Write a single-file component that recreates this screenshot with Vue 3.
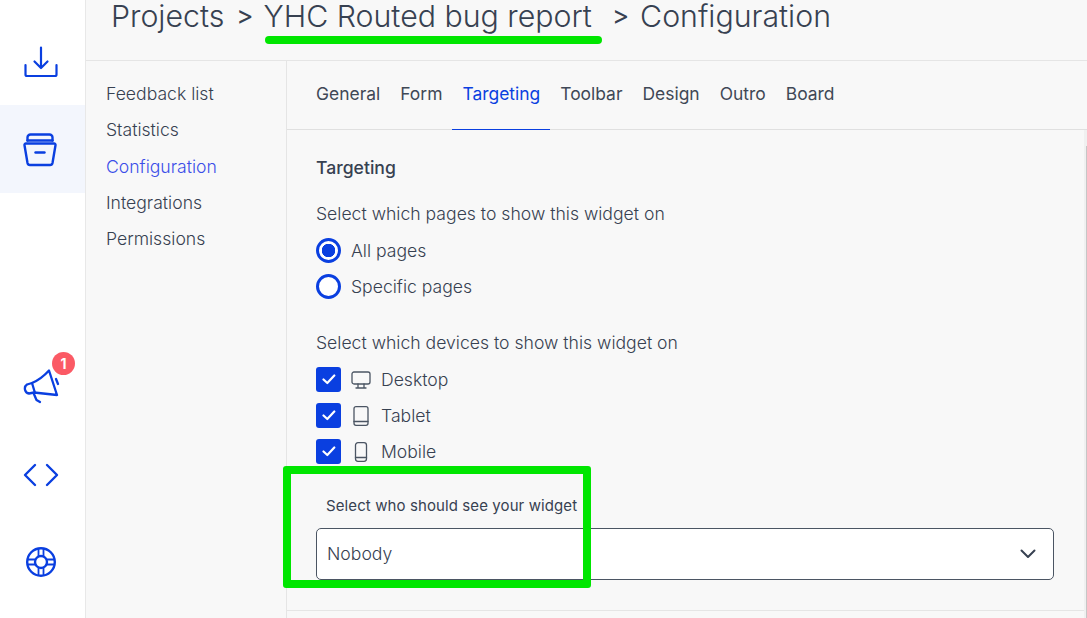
<script setup>
const menu = [
  { label: 'Feedback list' },
  { label: 'Statistics' },
  { label: 'Configuration', active: true },
  { label: 'Integrations' },
  { label: 'Permissions' },
]

const tabs = ['General', 'Form', 'Targeting', 'Toolbar', 'Design', 'Outro', 'Board']
</script>

<template>
  <div class="page">
    <aside class="rail">
      <a class="rail-item rail-download">
        <svg width="34" height="34" viewBox="0 0 34 34" fill="none" stroke="#0a3fe0" stroke-width="2.2" stroke-linecap="round" stroke-linejoin="round">
          <path d="M17 1.500v20M10.500 15.500l6.500 6.500 6.500-6.500" />
          <path d="M1.500 19v9.500a1.500 1.500 0 0 0 1.500 1.500h28a1.500 1.500 0 0 0 1.500-1.500V19" />
        </svg>
      </a>
      <a class="rail-item rail-archive">
        <svg width="34" height="36" viewBox="0 0 34 36" fill="none" stroke="#0a3fe0" stroke-width="2.4" stroke-linecap="round" stroke-linejoin="round">
          <path d="M4.500 8.500V5.500a3 3 0 0 1 3-3h19a3 3 0 0 1 3 3v3" />
          <path d="M4.500 8.500h25" />
          <path d="M3 11.500h28a1.500 1.500 0 0 1 1.500 1.800l-3 17.700a2.500 2.500 0 0 1-2.500 2H7a2.500 2.500 0 0 1-2.500-2l-3-17.700A1.500 1.500 0 0 1 3 11.500z" />
          <path d="M12.500 20.500h9" />
        </svg>
      </a>
      <div class="rail-bottom">
        <a class="rail-item rail-news">
          <svg width="38" height="36" viewBox="0 0 38 36" fill="none" stroke="#0a3fe0" stroke-width="2.3" stroke-linecap="round" stroke-linejoin="round">
            <path d="M27 1.500L35 26 12 23.500 7 24.500A5 5 0 0 1 5 15.500L10 14C16 11.500 22 7 27 1.500z" />
            <path d="M10 14l3 10M11.500 24l3 7 3.500 2" />
            <path d="M34 10l2 5" />
          </svg>
          <span class="badge">1</span>
        </a>
        <a class="rail-item rail-code">
          <svg width="36" height="24" viewBox="0 0 36 24" fill="none" stroke="#0a3fe0" stroke-width="2.400" stroke-linecap="round" stroke-linejoin="round">
            <path d="M12 2L2 12l10 10M24 2l10 10-10 10" />
          </svg>
        </a>
        <a class="rail-item rail-help">
          <svg width="32" height="32" viewBox="0 0 32 32" fill="none" stroke="#0a3fe0" stroke-width="2.400">
            <circle cx="16" cy="16" r="13.800" />
            <circle cx="16" cy="16" r="6" />
            <path d="M13.500 2.500v8M18.500 2.500v8M13.500 21.500v8M18.500 21.500v8M2.500 13.500h8M2.500 18.500h8M21.500 13.500h8M21.500 18.500h8" stroke-width="1.800" />
          </svg>
        </a>
      </div>
    </aside>

    <div class="body">
      <header class="crumbs">
        <span>Projects</span>
        <span class="sep">&gt;</span>
        <span class="crumb-project">YHC Routed bug report</span>
        <span class="sep sep-wide">&gt;</span>
        <span>Configuration</span>
      </header>

      <div class="columns">
        <nav class="submenu">
          <a v-for="item in menu" :key="item.label" :class="{ active: item.active }">{{ item.label }}</a>
        </nav>

        <main class="main">
          <div class="tabs">
            <a v-for="tab in tabs" :key="tab" :class="{ current: tab === 'Targeting' }">{{ tab }}</a>
          </div>

          <section class="content">
            <h2>Targeting</h2>

            <p class="question">Select which pages to show this widget on</p>
            <label class="option">
              <span class="radio checked"></span>
              All pages
            </label>
            <label class="option">
              <span class="radio"></span>
              Specific pages
            </label>

            <p class="question devices-question">Select which devices to show this widget on</p>
            <label class="option">
              <span class="check">
                <svg width="14" height="11" viewBox="0 0 14 11" fill="none" stroke="#fff" stroke-width="2.200" stroke-linecap="round" stroke-linejoin="round"><path d="M1.500 5.500l3.800 3.500 7-7.500" /></svg>
              </span>
              <svg class="device" width="20" height="18" viewBox="0 0 20 18" fill="none" stroke="#4b5563" stroke-width="1.300" stroke-linecap="round" stroke-linejoin="round">
                <rect x="1" y="1" width="18" height="12" rx="2" />
                <path d="M7 13v3.500M13 13v3.500M5 17h10" />
              </svg>
              <span class="option-text">Desktop</span>
            </label>
            <label class="option">
              <span class="check">
                <svg width="14" height="11" viewBox="0 0 14 11" fill="none" stroke="#fff" stroke-width="2.200" stroke-linecap="round" stroke-linejoin="round"><path d="M1.500 5.500l3.800 3.500 7-7.500" /></svg>
              </span>
              <svg class="device" width="20" height="20" viewBox="0 0 20 20" fill="none" stroke="#4b5563" stroke-width="1.300" stroke-linecap="round" stroke-linejoin="round">
                <rect x="3" y="0.700" width="14" height="18.600" rx="2" />
                <path d="M3 15.500h14" />
              </svg>
              Tablet
            </label>
            <label class="option">
              <span class="check">
                <svg width="14" height="11" viewBox="0 0 14 11" fill="none" stroke="#fff" stroke-width="2.200" stroke-linecap="round" stroke-linejoin="round"><path d="M1.500 5.500l3.800 3.500 7-7.500" /></svg>
              </span>
              <svg class="device" width="20" height="20" viewBox="0 0 20 20" fill="none" stroke="#4b5563" stroke-width="1.300" stroke-linecap="round" stroke-linejoin="round">
                <rect x="4.500" y="0.700" width="11" height="18.600" rx="2.500" />
                <path d="M4.500 15.500h11" />
              </svg>
              Mobile
            </label>

            <p class="who-label">Select who should see your widget</p>
            <div class="select">
              <span class="select-value">Nobody</span>
              <svg width="16" height="10" viewBox="0 0 16 10" fill="none" stroke="#374151" stroke-width="2" stroke-linecap="round" stroke-linejoin="round"><path d="M1.500 1.500L8 8l6.500-6.500" /></svg>
            </div>
          </section>
        </main>
      </div>
    </div>

    <!-- green marks someone drew over the screenshot -->
    <div class="mark-line"></div>
    <div class="mark-box"></div>
  </div>
</template>

<style scoped>
.page {
  position: relative;
  display: flex;
  width: 1087px;
  height: 618px;
  overflow: hidden;
  background: #f8f8f8;
  color: #374151;
  font-family: Inter, "Noto Sans", sans-serif;
  font-weight: 300;
}

.rail {
  display: flex;
  flex-direction: column;
  flex: 0 0 86px;
  background: #fff;
  border-right: 1px solid #e8e8e8;
  box-sizing: border-box;
}

.rail-item {
  position: relative;
  display: flex;
  align-items: center;
  justify-content: center;
  box-sizing: border-box;
  padding-right: 4px;
}

.rail-download {
  height: 105px;
  padding-top: 21px;
}

.rail-archive {
  height: 88px;
  padding-top: 2px;
  padding-right: 6px;
  background: #f3f6fd;
}

.rail-bottom {
  margin-top: 160px;
}

.rail-news {
  height: 50px;
  padding-top: 18px;
}

.rail-code {
  height: 24px;
  margin-top: 60px;
}

.rail-help {
  height: 32px;
  margin-top: 59px;
}

.badge {
  position: absolute;
  left: 52px;
  top: -1px;
  width: 23px;
  height: 23px;
  border-radius: 50%;
  background: #fb5a65;
  color: #fff;
  font-size: 14px;
  font-weight: 700;
  line-height: 23px;
  text-align: center;
}

.body {
  flex: 1;
  display: flex;
  flex-direction: column;
  min-width: 0;
}

.crumbs {
  display: flex;
  height: 61px;
  box-sizing: border-box;
  padding-left: 25px;
  border-bottom: 1px solid #e5e5e5;
  font-size: 30.300px;
  line-height: 32px;
  white-space: pre;
  color: #374151;
}

.sep {
  margin: 0 14px 0 12px;
  font-size: 26px;
  font-weight: 400;
}

.crumb-project {
  margin-left: -4px;
}

.sep-wide {
  margin: 0 11px 0 20px;
}

.columns {
  flex: 1;
  display: flex;
  min-height: 0;
}

.submenu {
  flex: 0 0 201px;
  display: flex;
  flex-direction: column;
  gap: 14.300px;
  box-sizing: border-box;
  padding: 22px 0 0 20px;
  border-right: 1px solid #e5e5e5;
  font-size: 17.600px;
  line-height: 22px;
}

.submenu a.active {
  color: #3b4ee8;
}

.main {
  flex: 1;
  display: flex;
  flex-direction: column;
  min-width: 0;
}

.tabs {
  display: flex;
  height: 69px;
  box-sizing: border-box;
  padding-left: 19px;
  border-bottom: 1px solid #e0e0e0;
  font-size: 17.450px;
  font-weight: 400;
  color: #3f4856;
}

.tabs a {
  padding: 0 10px;
  line-height: 66px;
  height: 69px;
  box-sizing: border-box;
}

.tabs a.current {
  color: #0a3fe0;
  border-bottom: 1px solid #0a3fe0;
}

.content {
  flex: 1;
  box-sizing: border-box;
  padding: 27px 0 0 29px;
  margin-right: 3px;
  border-bottom: 1px solid #e5e5e5;
  margin-bottom: 7px;
  position: relative;
}

/* scrollbar track and thumb at the right edge */
.content::before {
  content: "";
  position: absolute;
  right: -3px;
  top: 0;
  bottom: -8px;
  width: 3px;
  background: #f0f0f0;
}

.content::after {
  content: "";
  position: absolute;
  right: -3px;
  top: 16px;
  bottom: -8px;
  width: 1px;
  background: #c6c6c6;
}

h2 {
  margin: 0;
  font-size: 17.600px;
  font-weight: 500;
  line-height: 22px;
  color: #374151;
}

.question {
  margin: 24px 0 0;
  font-size: 17.600px;
  line-height: 22px;
}

.devices-question {
  margin-top: 33px;
}

.option {
  display: flex;
  align-items: center;
  height: 25px;
  margin-top: 11px;
  font-size: 17.600px;
}

.question + .option {
  margin-top: 13px;
}

.option-text {
  margin-top: -1px;
}

.radio {
  box-sizing: border-box;
  flex: none;
  width: 25px;
  height: 25px;
  margin-right: 10px;
  border: 3px solid #0a3fe0;
  border-radius: 50%;
  background: #fff;
}

.radio.checked {
  background: radial-gradient(circle, #0a3fe0 0 6.500px, #fff 7px);
}

.check {
  display: flex;
  flex: none;
  align-items: center;
  justify-content: center;
  width: 25px;
  height: 25px;
  margin-right: 10px;
  border-radius: 3px;
  background: #0a3fe0;
}

.device {
  flex: none;
  margin-right: 10px;
}

.who-label {
  margin: 32px 0 0 10px;
  font-size: 15px;
  font-weight: 400;
  line-height: 20px;
  letter-spacing: 0.100px;
}

.select {
  display: flex;
  align-items: center;
  justify-content: space-between;
  box-sizing: border-box;
  width: 738px;
  height: 52px;
  margin-top: 12px;
  padding: 0 17px 0 10px;
  border: 1px solid #4b5563;
  border-radius: 5px;
  background: #fff;
  font-size: 17.600px;
}

.select-value {
  margin-top: -1px;
}

.mark-line {
  position: absolute;
  left: 265px;
  top: 36px;
  width: 337px;
  height: 8px;
  border-radius: 4px;
  background: #00e600;
}

.mark-box {
  position: absolute;
  left: 283px;
  top: 466px;
  width: 308px;
  height: 122px;
  box-sizing: border-box;
  border: 8px solid #00e600;
  border-radius: 3px;
}
</style>
